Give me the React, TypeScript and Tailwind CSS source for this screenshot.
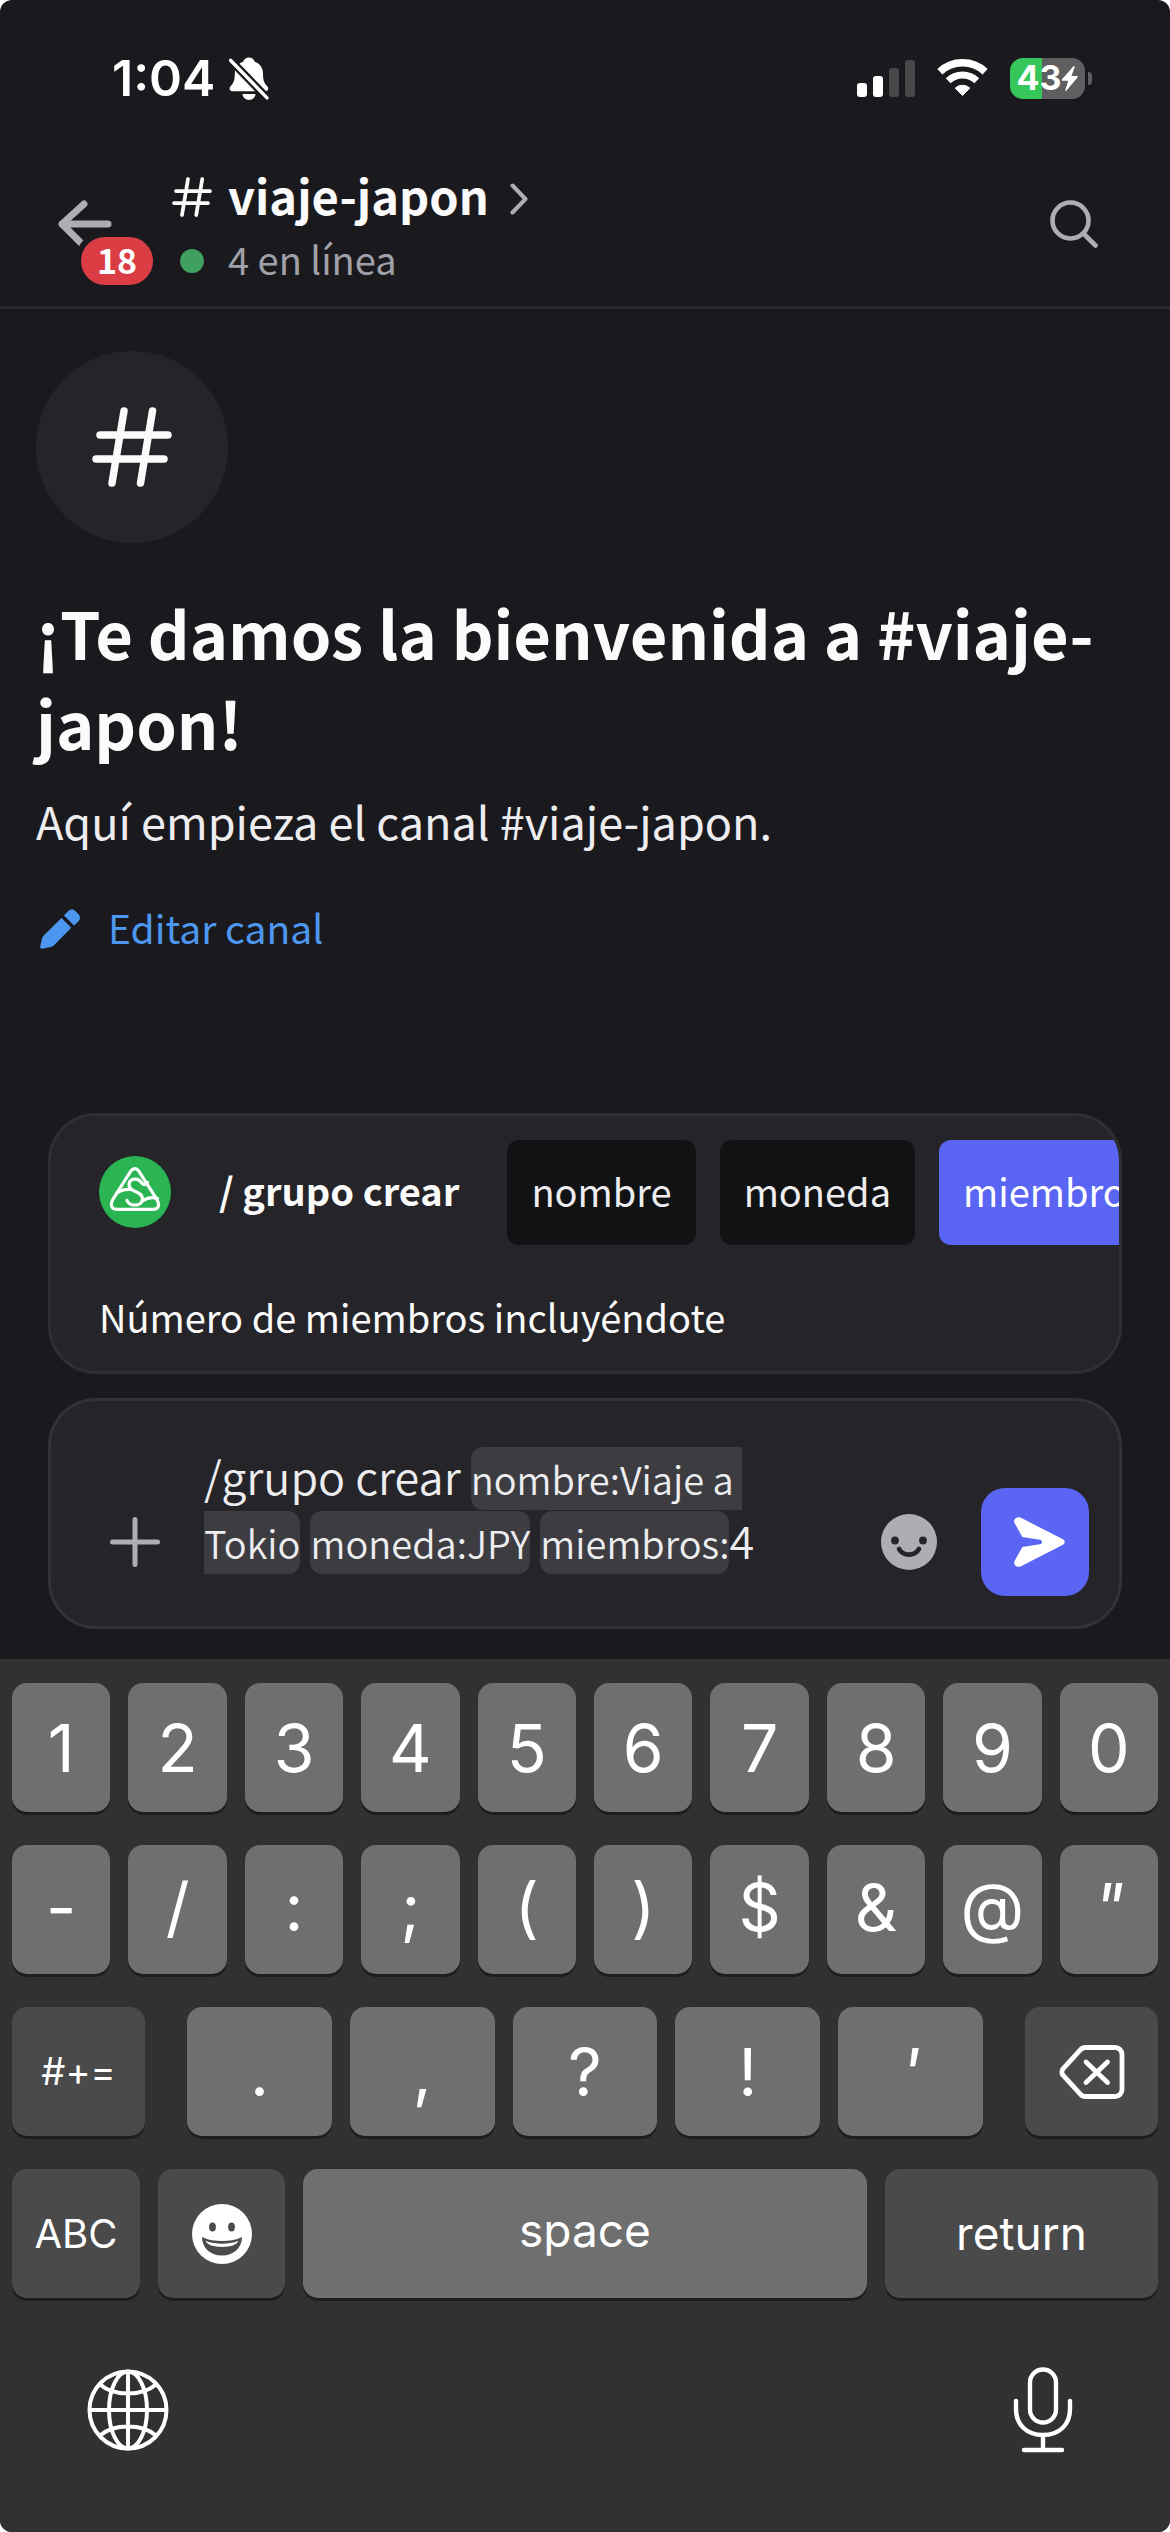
import React, { useState } from 'react';
import clsx from 'clsx';

// ── Icons ────────────────────────────────────────────────────────────────────

const BellOffIcon = () => (
  <svg viewBox="0 0 40 43" className="h-[43px] w-10" aria-hidden="true">
    <mask id="bell-cut">
      <rect width="40" height="43" fill="white" />
      <path d="M-2 -0.500 41.500 44.500" stroke="black" strokeWidth="8" />
    </mask>
    <g mask="url(#bell-cut)" fill="currentColor">
      <path d="M20 0.500c2.800 0 5 1.700 5.700 4.200 5.300 1.800 8.300 6 8.300 11.700 0 6.500 1 9.500 4.500 13.200 1.300 1.500.8 4.600-1.600 4.600H2.900C.5 34.200 0 31.100 1.300 29.600 4.800 25.900 5.800 22.900 5.800 16.400c0-5.700 3-9.900 8.400-11.700C14.900 2.200 17.200.5 20 .5z" />
      <path d="M13.500 37h13a6.500 6 0 0 1-13 0z" />
    </g>
    <path d="M1.500 3.200 38 40.900" stroke="currentColor" strokeWidth="3.400" strokeLinecap="round" />
  </svg>
);

const WifiIcon = () => (
  <svg viewBox="0 0 51 38" className="h-[38px] w-[51px]" fill="none" stroke="currentColor" aria-hidden="true">
    <path d="M2.900 12.700a33.200 33.200 0 0 1 45.200 0" strokeWidth="7.400" />
    <path d="M11.200 21.700a21 21 0 0 1 28.600 0" strokeWidth="7" />
    <path d="M25.500 36.500 18.200 29a11 11 0 0 1 14.600 0z" fill="currentColor" strokeWidth="1" strokeLinejoin="round" />
  </svg>
);

const BackIcon = () => (
  <svg viewBox="0 0 54 48" className="h-12 w-[54px]" fill="none" stroke="currentColor" strokeWidth="7" strokeLinecap="round" strokeLinejoin="round" aria-hidden="true">
    <path d="M50 24H4M26 4 4 24 24 44" />
  </svg>
);

const HashIcon = ({ className }: { className: string }) => (
  <svg viewBox="0 0 80 80" className={className} fill="none" stroke="currentColor" strokeWidth="7.500" strokeLinecap="round" aria-hidden="true">
    <path d="M32 4 20 76M60.500 4 48.500 76M8 28H76M4 52H72" />
  </svg>
);

const ChevronIcon = () => (
  <svg viewBox="0 0 20 32" className="mt-2 ml-1 h-8 w-5" fill="none" stroke="currentColor" strokeWidth="4" strokeLinecap="round" strokeLinejoin="round" aria-hidden="true">
    <path d="M3.500 2.500 16.500 16 3.500 29.500" />
  </svg>
);

const SearchIcon = () => (
  <svg viewBox="0 0 48 48" className="h-12 w-12" fill="none" stroke="currentColor" strokeWidth="4.600" strokeLinecap="round" aria-hidden="true">
    <circle cx="20.500" cy="20.500" r="18" />
    <path d="M34 34 45.500 45.500" />
  </svg>
);

const PencilIcon = () => (
  <svg viewBox="0 0 40 40" className="mt-1 h-10 w-10" fill="currentColor" aria-hidden="true">
    <path d="M21.500 9 31.300 18.700 14 36.200c-1.200 1.200-2.800 1.800-4.400 2.100L2.300 39.700C1 39.900 0 38.900.2 37.600l1.600-7.200c.3-1.500 1-3 2.200-4.200z" />
    <path d="M24 6.500 28.300 2a5 5 0 0 1 7 0l3.200 3.200a5 5 0 0 1 0 7L34 16.500z" />
  </svg>
);

const AppLogo = () => (
  <svg viewBox="0 0 72 72" className="h-[72px] w-[72px] shrink-0" fill="none" stroke="white" strokeWidth="3.200" strokeLinecap="round" strokeLinejoin="round" aria-hidden="true">
    <circle cx="36" cy="36" r="36" fill="#2bb552" stroke="none" />
    <path d="M31.300 15.800Q35.800 9.500 40.300 15.800L58 43.500Q62.500 53.200 53.500 53.400H18.500Q9.500 53.200 13.800 43.500z" />
    <path d="M48.500 26.500c-1.500 3-4.500 2.500-6 .2C40.500 23.400 37 22.600 34 23.300c-5 1.500-5 7.500-1.500 10.200 3.500 2.500 11 3.500 11 9 0 5-4 6.700-8 6.500-4 0-6.500-2-7.500-4.500" />
    <path d="M17.500 37.500c4-3.500 10-4.500 15-4M43.500 45c3.500-2.500 9-4.500 15-2.500" />
  </svg>
);

const PlusIcon = () => (
  <svg viewBox="0 0 50 50" className="h-[50px] w-[50px]" fill="none" stroke="currentColor" strokeWidth="5" strokeLinecap="round" aria-hidden="true">
    <path d="M25 2.500v45M2.500 25h45" />
  </svg>
);

const SmileIcon = () => (
  <svg viewBox="0 0 56 56" className="h-14 w-14" aria-hidden="true">
    <circle cx="28" cy="28" r="28" fill="currentColor" />
    <circle cx="14" cy="26.500" r="3.900" fill="#242429" />
    <circle cx="42" cy="26.500" r="3.900" fill="#242429" />
    <path d="M18 35c4.500 7.500 15.500 7.500 20 0" fill="none" stroke="#242429" strokeWidth="4.600" strokeLinecap="round" />
  </svg>
);

const SendIcon = () => (
  <svg viewBox="0 0 51 50" className="ml-2 h-[50px] w-[51px]" fill="currentColor" aria-hidden="true">
    <path d="M6.500.6 49 22.300a3 3 0 0 1 0 5.400L6.500 49.400C3 51-.8 48 .3 44.500L8.300 30 26 27.200c2.600-.4 2.600-4 0-4.400L8.300 20 .3 5.500C-.8 2 3-.9 6.500.6z" />
  </svg>
);

const BackspaceIcon = () => (
  <svg viewBox="0 0 66 54" className="h-[54px] w-[66px]" fill="none" stroke="currentColor" strokeWidth="4.800" strokeLinecap="round" strokeLinejoin="round" aria-hidden="true">
    <path d="M26.500 2.500H56a7 7 0 0 1 7 7v35a7 7 0 0 1-7 7H26.500c-2 0-3.800-.8-5.200-2.400L4 30.200a5 5 0 0 1 0-6.400L21.300 4.900c1.400-1.600 3.200-2.400 5.200-2.400z" />
    <path d="M27 17 48.500 37.500M48.500 17 27 37.500" />
  </svg>
);

const GrinIcon = () => (
  <svg viewBox="0 0 60 60" className="h-[60px] w-[60px]" aria-hidden="true">
    <circle cx="30" cy="30" r="30" fill="currentColor" />
    <ellipse cx="20.500" cy="23" rx="3.400" ry="4.500" fill="#4a4a4b" />
    <ellipse cx="39.500" cy="23" rx="3.400" ry="4.500" fill="#4a4a4b" />
    <path d="M10 33c6 3 13 4 20 4s14-1 20-4c0 11-8.500 18.500-20 18.500S10 44 10 33z" fill="#4a4a4b" />
    <path d="M13.500 36.800c5 2.200 11 2.900 16.500 2.900s11.500-.7 16.500-2.900c-2 4.200-7.500 6.200-16.500 6.200s-14.500-2-16.500-6.200z" fill="currentColor" />
  </svg>
);

const GlobeIcon = () => (
  <svg viewBox="0 0 82 82" className="h-[82px] w-[82px]" fill="none" stroke="currentColor" strokeWidth="4" aria-hidden="true">
    <circle cx="41" cy="41" r="38.500" />
    <ellipse cx="41" cy="41" rx="19" ry="38.500" />
    <path d="M41 2.500v77M2.500 41h77M13 15.500C27 27.500 55 27.500 69 15.500M13 66.500c14-12 42-12 56 0" />
  </svg>
);

const MicIcon = () => (
  <svg viewBox="0 0 60 86" className="h-[86px] w-[60px]" fill="none" stroke="currentColor" strokeWidth="4.400" strokeLinecap="round" aria-hidden="true">
    <rect x="17" y="2.500" width="26" height="53" rx="13" />
    <path d="M3 34v8c0 16 11 26 27 26s27-10 27-26v-8M30 68v14M11 83h38" />
  </svg>
);

// ── Status bar ───────────────────────────────────────────────────────────────

const SIGNAL = ['h-[14px] bg-white', 'h-[21px] bg-white', 'h-[29px] bg-[#48484a]', 'h-[37px] bg-[#48484a]'];

const StatusBar = () => (
  <div className="flex h-[156px] items-center justify-between pr-[78px] pl-28 font-['Inter',sans-serif] text-white">
    <div className="flex items-center gap-3.5">
      <span className="text-[50px] leading-none font-semibold">1:04</span>
      <BellOffIcon />
    </div>
    <div className="flex items-center gap-[22px]">
      <div className="flex items-end gap-1.5">
        {SIGNAL.map(bar => <span key={bar} className={clsx('w-2.5 rounded-[3px]', bar)} />)}
      </div>
      <WifiIcon />
      <div className="flex items-center gap-[3px]">
        <div className="flex h-[41px] w-[75px] items-center justify-center rounded-[13px] bg-linear-to-r from-[#35c759] from-43% to-[#5f5f62] to-43%">
          <span className="text-[34px] leading-none font-bold">43</span>
          <svg viewBox="0 0 17 25" className="h-[25px] w-[17px]" fill="currentColor" aria-hidden="true">
            <path d="M12.500.3 1 13.300c-.6.800-.2 1.500.6 1.500h5.600L4.300 24c-.2.900.6 1.200 1.200.5L16.500 11.600c.6-.8.200-1.500-.6-1.500h-5.400L13.700.9c.2-.9-.6-1.300-1.200-.6z" />
          </svg>
        </div>
        <span className="h-[13px] w-1 rounded-r-full bg-[#5f5f62]" />
      </div>
    </div>
  </div>
);

// ── Channel ──────────────────────────────────────────────────────────────────

const ChannelHeader = () => (
  <header className="flex h-[153px] items-start border-b-[3px] border-[#28282d] pr-[72px] pl-[58px] text-[#adaeb4]">
    <button type="button" aria-label="Atrás, 18 menciones" className="relative mt-11 h-12 w-[54px]">
      <BackIcon />
      <span className="absolute top-[37px] left-[23px] flex h-12 w-[72px] items-center justify-center rounded-full bg-[#da3e44] pb-0.5 text-[34px] leading-none font-bold text-white ring-6 ring-[#1a1a1e]">
        18
      </span>
    </button>
    <div className="ml-[60px] flex-1">
      <button type="button" className="mt-[5px] flex h-[68px] items-center gap-4">
        <HashIcon className="mt-1 h-10 w-10 text-[#fbfbfb]" />
        <span className="text-[47px] leading-[68px] font-bold text-[#fbfbfb]">viaje-japon</span>
        <ChevronIcon />
      </button>
      <div className="flex items-center gap-6 pl-2">
        <span className="mt-1 h-6 w-6 rounded-full bg-[#40a05f]" />
        <span className="text-[38px] leading-[60px] text-[#a0a1a8]">4 en línea</span>
      </div>
    </div>
    <button type="button" aria-label="Buscar" className="mt-11">
      <SearchIcon />
    </button>
  </header>
);

const Welcome = () => (
  <main className="flex-1 px-9 pt-[42px] text-[#fbfbfb]">
    <div className="flex h-48 w-48 items-center justify-center rounded-full bg-[#242429]">
      <HashIcon className="h-20 w-20" />
    </div>
    <h1 className="mt-11 text-[65px] leading-[90px] font-bold">¡Te damos la bienvenida a #viaje-japon!</h1>
    <p className="mt-6 text-[45px] leading-[60px] text-[#ededf0]">Aquí empieza el canal #viaje-japon.</p>
    <button type="button" className="mt-[46px] flex items-center gap-7 pl-1 text-[39px] leading-[60px] text-[#4e97f0]">
      <PencilIcon />
      Editar canal
    </button>
  </main>
);

// ── Slash command ────────────────────────────────────────────────────────────

const OPTIONS = ['nombre', 'moneda', 'miembros'];

const CommandCard = ({ active, onPick }: { active: string; onPick: (option: string) => void }) => (
  <section className="overflow-hidden rounded-[48px] border-[3px] border-[#2e2e33] bg-[#242429] text-[38px] text-[#fbfbfb]">
    <div className="flex h-[153px] items-center border-b border-[#28282d] pl-12">
      <AppLogo />
      <h2 className="ml-12 shrink-0 pb-1 leading-[60px] font-bold">/ grupo crear</h2>
      <div className="ml-12 flex gap-6">
        {OPTIONS.map(option => (
          <button
            key={option}
            type="button"
            onClick={() => onPick(option)}
            className={clsx(
              'h-[105px] shrink-0 rounded-xl px-6 pb-1',
              option === active ? 'bg-[#5a65f3] text-white' : 'bg-[#111214] text-[#ededf0]',
            )}
          >
            {option}
          </button>
        ))}
      </div>
    </div>
    <p className="px-12 pt-[18px] pb-6 leading-[60px]">Número de miembros incluyéndote</p>
  </section>
);

const TOKEN = 'rounded-xl bg-[#3c3c41] py-1 text-[38px] leading-none';

const Composer = ({ onFocusMembers }: { onFocusMembers: () => void }) => {
  const [members, setMembers] = useState('4');
  return (
    <form
      onSubmit={e => e.preventDefault()}
      className="flex items-end rounded-[48px] border-[3px] border-[#323237] bg-[#242429] pt-[43px] pr-[30px] pb-[30px] pl-[59px] text-[#adaeb4]"
    >
      <button type="button" aria-label="Añadir" className="mb-[29px]">
        <PlusIcon />
      </button>
      <div className="mr-16 mb-6 ml-11 flex-1 text-[45px] leading-[64px] font-[350] whitespace-break-spaces text-[#ededf0]">
        {'/grupo crear '}
        <span className={TOKEN}>nombre:Viaje a Tokio</span>
        {' '}
        <span className={TOKEN}>moneda:JPY</span>
        {' '}
        <span className="whitespace-nowrap">
          <label htmlFor="members" className={TOKEN}>miembros:</label>
          <input
            id="members"
            inputMode="numeric"
            value={members}
            onFocus={onFocusMembers}
            onChange={e => setMembers(e.target.value)}
            className="h-12 w-12 bg-transparent align-baseline leading-[48px] outline-none"
          />
        </span>
      </div>
      <button type="button" aria-label="Emoji" className="mb-[26px]">
        <SmileIcon />
      </button>
      <button type="submit" aria-label="Enviar" className="ml-11 flex h-[108px] w-[108px] items-center justify-center rounded-3xl bg-[#5a65f3] text-white">
        <SendIcon />
      </button>
    </form>
  );
};

// ── Keyboard ─────────────────────────────────────────────────────────────────

const Key = ({ dark, className, label, children }: {
  dark?: boolean; className?: string; label?: string; children: React.ReactNode;
}) => (
  <button
    type="button"
    aria-label={label}
    className={clsx(
      'flex h-[129px] items-center justify-center rounded-[15px] shadow-[0_3px_0_#1d1d1e]',
      dark ? 'bg-[#4a4a4b]' : 'bg-[#6f6f70]',
      className,
    )}
  >
    {children}
  </button>
);

const KeyRow = ({ keys, className }: { keys: string[]; className?: string }) => (
  <div className="flex flex-1 gap-[18px] text-[66px] leading-none">
    {keys.map(k => (
      <Key key={k} className={clsx('min-w-0 flex-1', className, (k === '"' || k === "'") && 'italic')}>{k}</Key>
    ))}
  </div>
);

const Keyboard = () => (
  <div className="flex flex-col gap-[33px] bg-[#313132] px-3 pt-6 pb-[79px] font-['Inter',sans-serif] text-white">
    <KeyRow keys={['1', '2', '3', '4', '5', '6', '7', '8', '9', '0']} />
    <KeyRow className="pb-1.5" keys={['-', '/', ':', ';', '(', ')', '$', '&', '@', '"']} />
    <div className="flex gap-[42px]">
      <Key dark className="w-[133px] text-[38px]">#+=</Key>
      <KeyRow keys={['.', ',', '?', '!', "'"]} />
      <Key dark label="Borrar" className="w-[133px]"><BackspaceIcon /></Key>
    </div>
    <div className="flex gap-[18px] text-[46px]">
      <Key dark className="w-32 text-[40px]">ABC</Key>
      <Key dark label="Emoji" className="w-[127px]"><GrinIcon /></Key>
      <Key className="flex-1 pb-1.5">space</Key>
      <Key dark className="w-[273px]">return</Key>
    </div>
    <div className="mt-9 flex items-center justify-between pr-[85px] pl-[75px]">
      <button type="button" aria-label="Cambiar idioma"><GlobeIcon /></button>
      <button type="button" aria-label="Dictado"><MicIcon /></button>
    </div>
  </div>
);

const App: React.FC = () => {
  const [active, setActive] = useState('miembros');
  return (
    <div className="flex min-h-screen flex-col overflow-hidden rounded-xl bg-[#1a1a1e] font-['Noto_Sans_CJK_SC','Noto_Sans',sans-serif]">
      <StatusBar />
      <ChannelHeader />
      <Welcome />
      <div className="flex flex-col gap-6 px-12 pb-[30px]">
        <CommandCard active={active} onPick={setActive} />
        <Composer onFocusMembers={() => setActive('miembros')} />
      </div>
      <Keyboard />
    </div>
  );
};

export default App;
